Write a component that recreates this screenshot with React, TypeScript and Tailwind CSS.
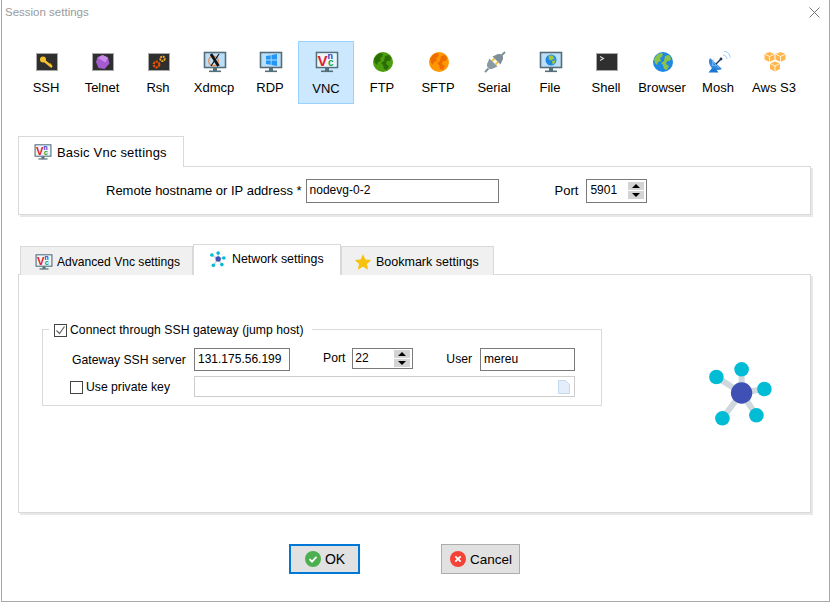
import React from "react";

function Box({ children }: { children: React.ReactNode }) {
  return (
    <svg width="24" height="24" viewBox="0 0 24 24">
      <rect x="1.5" y="3.5" width="21" height="17" fill="#2f2f2f" stroke="#a9a9a9" />
      {children}
    </svg>
  );
}

function Monitor({ children, size = 24 }: { children?: React.ReactNode; size?: number }) {
  return (
    <svg width={size} height={size} viewBox="0 0 24 24">
      <rect x="1.5" y="2.5" width="21" height="15" fill="#bbdefb" stroke="#546e7a" strokeWidth="1.6" />
      <rect x="10" y="18" width="4" height="3" fill="#546e7a" />
      <rect x="6" y="20.5" width="12" height="1.6" fill="#546e7a" />
      {children}
    </svg>
  );
}

function Vnc({ size = 24 }: { size?: number }) {
  return (
    <Monitor size={size}>
      <rect x="2.4" y="3.4" width="19.2" height="13.2" fill="#eef4f8" />
      <text x="2.6" y="15.6" fontFamily="Liberation Sans, sans-serif" fontWeight="700" fontSize="15" fill="#e11d2e">
        V
        <tspan x="12.6" y="9.4" fontSize="9" fill="#1e40c8">n</tspan>
        <tspan x="13" y="16" fontSize="10" fill="#16a34a">c</tspan>
      </text>
    </Monitor>
  );
}

function Globe({ sea, land, size = 24 }: { sea: string; land: string; size?: number }) {
  return (
    <svg width={size} height={size} viewBox="0 0 24 24">
      <circle cx="12" cy="12" r="10" fill={sea} />
      <path d="M6 5c2-2 5-2 6-1l-1 3-2 1 1 3-3 1-1 3-2-2-1-4zM14 6l4-1 2 3-1 3-3 0-1 3 3 2-2 4-3-1-1-4-2-2 3-2z" fill={land} />
    </svg>
  );
}

const tools: { label: string; icon: React.ReactNode; active?: boolean }[] = [
  {
    label: "SSH",
    icon: (
      <Box>
        <circle cx="8" cy="9.500" r="3" fill="#fbc02d" />
        <path d="M9.500 11l7.500 6" stroke="#fbc02d" strokeWidth="2.400" />
        <path d="M14.500 15.500l1.500-1.800" stroke="#fbc02d" strokeWidth="1.400" />
      </Box>
    ),
  },
  {
    label: "Telnet",
    icon: (
      <Box>
        <path d="M11.500 5l5.500 2.500 1.500 6-5 5.500-6-1-2.500-6 1.500-5z" fill="#a45bd0" />
        <path d="M11.500 5l5.500 2.500-2.500 5L7 8z" fill="#c98ae8" />
      </Box>
    ),
  },
  {
    label: "Rsh",
    icon: (
      <Box>
        <circle cx="9.500" cy="14.500" r="2.800" fill="none" stroke="#e65100" strokeWidth="2.200" strokeDasharray="2.200 .8" />
        <circle cx="15.500" cy="8.800" r="2.300" fill="none" stroke="#f9a825" strokeWidth="1.800" strokeDasharray="1.800 .7" />
      </Box>
    ),
  },
  {
    label: "Xdmcp",
    icon: (
      <Monitor>
        <circle cx="10.500" cy="11" r="4.800" fill="none" stroke="#e8914f" strokeWidth="1.400" />
        <path d="M8 4l7.500 12" stroke="#111" strokeWidth="2.800" />
        <path d="M16 4L8 16" stroke="#111" strokeWidth="1.200" />
      </Monitor>
    ),
  },
  {
    label: "RDP",
    icon: (
      <Monitor>
        <path d="M7 6l4.700-.8v4.300H7zM12.500 5l5.500-1v5.500h-5.500zM7 10.500h4.700v4.300L7 14zM12.500 10.500H18V16l-5.500-1z" fill="#2196f3" />
      </Monitor>
    ),
  },
  { label: "VNC", icon: <Vnc />, active: true },
  { label: "FTP", icon: <Globe sea="#4c9e0f" land="#2c6e06" /> },
  { label: "SFTP", icon: <Globe sea="#ff9800" land="#ef6c00" /> },
  {
    label: "Serial",
    icon: (
      <svg width="24" height="24" viewBox="0 0 24 24">
        <path d="M9 11l2.500-2.500M12.500 14.500l2.500-2.500" stroke="#fbc02d" strokeWidth="1.800" />
        <path d="M9.500 6.500l8 8 2.500-5.500V6.500l-2.500-2.500H15z" fill="#7f8f98" />
        <path d="M6.500 8.500l8 8-5.500 2.500H6.500L4 16.500V14z" fill="#8a9aa3" />
        <path d="M18.500 5.500L22 2M5.500 18.500L2 22" stroke="#7f8f98" strokeWidth="1.800" />
      </svg>
    ),
  },
  {
    label: "File",
    icon: (
      <Monitor>
        <circle cx="12" cy="10" r="5.500" fill="#1e88e5" />
        <path d="M9.500 5.500l4 0 2 3-3.500 2-2-1zM13 11l3.500-1-1 3.500-2 1z" fill="#a5c73a" />
      </Monitor>
    ),
  },
  {
    label: "Shell",
    icon: (
      <Box>
        <path d="M5 6.500l3.500 2L5 10.500" fill="none" stroke="#e0e0e0" strokeWidth="1.100" />
      </Box>
    ),
  },
  { label: "Browser", icon: <Globe sea="#1e88e5" land="#8bc34a" /> },
  {
    label: "Mosh",
    icon: (
      <svg width="24" height="24" viewBox="0 0 24 24">
        <path d="M3 8l12 11c-4 2-9 1-11-2s-3-6-1-9z" fill="#2e86de" />
        <path d="M5 11l7 7M7 9l-2 7M9 16l-4-1" stroke="#90caf9" strokeWidth=".7" />
        <path d="M9 14l5-5" stroke="#1d3557" strokeWidth="1.400" />
        <circle cx="14" cy="9" r="1.400" fill="#1d3557" />
        <path d="M1.500 22.500h10L9 19l-4-1z" fill="#1976d2" />
        <path d="M16 5c2 0 4 2 4 4M17 1.500c3.500 0 6 2.500 6 6" fill="none" stroke="#90caf9" strokeWidth="1" />
      </svg>
    ),
  },
  {
    label: "Aws S3",
    icon: (
      <svg width="24" height="24" viewBox="0 0 24 24">
        <path d="M6.500 2l5 2v5.500l-5 2.500-5-2.500V4z" fill="#ffb74d" />
        <path d="M17.500 2l5 2v5.500l-5 2.500-5-2.500V4z" fill="#ffb74d" />
        <path d="M12 11.500l5 2V19l-5 2.500L7 19v-5.500z" fill="#ffb74d" />
        <path d="M1.500 4l5 2.500 5-2.500M6.500 6.500V12M12.500 4l5 2.500 5-2.500M17.500 6.500V12M7 13.500l5 2.500 5-2.500M12 16v5.500" fill="none" stroke="#fff" strokeWidth=".8" />
      </svg>
    ),
  },
];

function Star() {
  return (
    <svg width="18" height="18" viewBox="0 0 24 24">
      <path d="M12 1.500l3.300 7 7.700.9-5.700 5.200 1.500 7.600L12 18.400l-6.800 3.800 1.500-7.600L1 9.400l7.700-.9z" fill="#f5c211" />
    </svg>
  );
}

function NetIcon({ size }: { size: number }) {
  return (
    <svg width={size} height={size} viewBox="-1 0 68 68">
      <g stroke="#cfd8dc" strokeWidth="6">
        <path d="M31.600 32L31.600 8.300M31.600 32L6.400 16M31.600 32L54.400 28M31.600 32L12.400 57.300M31.600 32L46.400 54.300" />
      </g>
      <circle cx="31.600" cy="32" r="10.700" fill="#3f51b5" />
      <circle cx="31.600" cy="8.300" r="7.300" fill="#00bcd4" />
      <circle cx="6.400" cy="16" r="7.300" fill="#00bcd4" />
      <circle cx="54.400" cy="28" r="7.300" fill="#00bcd4" />
      <circle cx="12.400" cy="57.300" r="7.300" fill="#00bcd4" />
      <circle cx="46.400" cy="54.300" r="7.300" fill="#00bcd4" />
    </svg>
  );
}

function Spin({ value, h, pad }: { value: string; h: string; pad: string }) {
  return (
    <div className={`flex w-[61px] items-center justify-between border border-[#7a7a7a] bg-white pr-[2px] text-[12px] ${h} ${pad}`}>
      <span>{value}</span>
      <div className="flex flex-col gap-[1px]">
        <div className="flex h-[8px] w-[16px] items-center justify-center bg-[#d4d4d4]">
          <div className="h-0 w-0 border-x-[4px] border-b-[4px] border-x-transparent border-b-black" />
        </div>
        <div className="flex h-[8px] w-[16px] items-center justify-center bg-[#d4d4d4]">
          <div className="h-0 w-0 border-x-[4px] border-t-[4px] border-x-transparent border-t-black" />
        </div>
      </div>
    </div>
  );
}

function Check({ checked }: { checked?: boolean }) {
  return (
    <div className="flex h-[13px] w-[13px] shrink-0 items-center justify-center border border-[#444] bg-white">
      {checked && (
        <svg width="11" height="11" viewBox="0 0 11 11">
          <path d="M1.500 5.500l3 3 5-7" fill="none" stroke="#666" strokeWidth="1.200" />
        </svg>
      )}
    </div>
  );
}

export default function App() {
  return (
    <div className="h-[603px] w-[831px] bg-white pl-px text-[13px] leading-[15px] text-black [font-family:'Liberation_Sans',Arial,sans-serif]">
      <div className="flex h-[602px] w-[829px] flex-col border-x border-b border-[#a8a8a8]">
        <div className="flex h-[24px] items-center justify-between pl-[3px] pr-[9px] text-[11.500px] text-[#9a9a9a]">
          <span>Session settings</span>
          <svg width="11" height="11" viewBox="0 0 11 11">
            <path d="M.5.500l10 10M10.500.500l-10 10" stroke="#777" strokeWidth="1" />
          </svg>
        </div>

        <div className="mt-[17px] flex pl-[16px]">
          {tools.map((t) => (
            <div
              key={t.label}
              className={`flex h-[63px] w-[56px] flex-col items-center pt-[8px] ${t.active ? "border border-[#99d1ff] bg-[#cce8ff]" : "border border-transparent"}`}
            >
              <div className="ml-[2px] h-[24px]">{t.icon}</div>
              <span className={`whitespace-nowrap ${t.active ? "mt-[7px]" : "mt-[6px]"}`}>{t.label}</span>
            </div>
          ))}
        </div>

        <div className="mt-[32px] pl-[16px]">
          <div className="relative z-10 -mb-px flex h-[31px] w-[166px] items-center gap-[5px] border border-b-0 border-[#d9d9d9] bg-white pl-[15px]">
            <Vnc size={18} />
            <span className="tracking-[0.2px]">Basic Vnc settings</span>
          </div>
          <div className="flex h-[49px] w-[793px] items-center border border-[#d9d9d9] shadow-[2px_2px_0_#e8e8e8]">
            <span className="ml-[87px] whitespace-nowrap">Remote hostname or IP address *</span>
            <div className="ml-[4px] flex h-[24px] w-[193px] items-center border border-[#7a7a7a] pl-[3px] text-[12px]">nodevg-0-2</div>
            <span className="ml-[56px]">Port</span>
            <div className="ml-[8px]">
              <Spin value="5901" h="h-[24px]" pad="pl-[3px]" />
            </div>
          </div>
        </div>

        <div className="mt-[29px] pl-[16px]">
          <div className="relative z-10 -mb-px flex h-[31px] items-end pl-[2px]">
            <div className="flex h-[29px] w-[173px] items-center gap-[4px] border border-b-0 border-[#d9d9d9] bg-[#f0f0f0] pl-[14px] pt-[2px] text-[12.100px]">
              <Vnc size={18} />
              <span>Advanced Vnc settings</span>
            </div>
            <div className="flex h-[31px] w-[148px] items-center gap-[5px] border border-b-0 border-[#d9d9d9] bg-white pl-[16px] pb-[2px] text-[12.400px]">
              <NetIcon size={17} />
              <span>Network settings</span>
            </div>
            <div className="flex h-[29px] w-[153px] items-center gap-[4px] border border-b-0 border-[#d9d9d9] bg-[#f0f0f0] pl-[12px] pt-[2px] text-[12.500px]">
              <Star />
              <span>Bookmark settings</span>
            </div>
          </div>
          <div className="relative flex h-[239px] w-[793px] items-start border border-[#d9d9d9] shadow-[2px_2px_0_#e8e8e8]">
            <div className="relative ml-[23px] mt-[54px] h-[77px] w-[560px] border border-[#d9d9d9] text-[12.200px]">
              <div className="absolute -top-[7px] left-[6px] flex items-center gap-[3px] bg-white pl-[5px] pr-[8px]">
                <Check checked />
                <span className="tracking-[0.05px]">Connect through SSH gateway (jump host)</span>
              </div>
              <div className="ml-[29px] mt-[18px] flex items-start">
                <span className="mt-[5px] w-[122px]">Gateway SSH server</span>
                <div className="flex h-[23px] w-[96px] items-center border border-[#7a7a7a] pl-[3px] text-[12px]">131.175.56.199</div>
                <span className="ml-[33px] mt-[3px]">Port</span>
                <div className="ml-[7px]">
                  <Spin value="22" h="h-[21px]" pad="pl-[2px]" />
                </div>
                <span className="ml-[33px] mt-[4px]">User</span>
                <div className="ml-[8px] flex h-[23px] w-[95px] items-center border border-[#7a7a7a] pl-[3px] text-[12px]">mereu</div>
              </div>
              <div className="ml-[27px] mt-[5px] flex items-start">
                <div className="mt-[5px]">
                  <Check />
                </div>
                <span className="ml-[3px] mt-[4px] w-[108px]">Use private key</span>
                <div className="flex h-[21px] w-[381px] items-center justify-end border border-[#cccccc] pr-[4px]">
                  <svg width="12" height="14" viewBox="0 0 12 14">
                    <path d="M.5.500h7l4 4v9H.5z" fill="#e3eefa" stroke="#c5d9ee" />
                  </svg>
                </div>
              </div>
            </div>
            <div className="ml-[107px] mt-[86px]">
              <NetIcon size={68} />
            </div>
          </div>
        </div>

        <div className="mt-[31px] flex pl-[287px]">
          <div className="flex h-[30px] w-[71px] items-center justify-center gap-[4px] border-2 border-[#0078d7] bg-[#e1e1e1] pl-px text-[14px]">
            <svg width="16" height="16" viewBox="0 0 16 16">
              <circle cx="8" cy="8" r="8" fill="#4caf50" />
              <path d="M4.500 8.200l2.500 2.500 4.500-4.800" fill="none" stroke="#fff" strokeWidth="1.800" />
            </svg>
            <span>OK</span>
          </div>
          <div className="ml-[81px] flex h-[30px] w-[79px] items-center justify-center gap-[4px] border border-[#adadad] bg-[#e1e1e1] pl-px text-[13.500px]">
            <svg width="16" height="16" viewBox="0 0 16 16">
              <circle cx="8" cy="8" r="8" fill="#f44336" />
              <path d="M5.300 5.300l5.400 5.400M10.700 5.300l-5.400 5.400" fill="none" stroke="#fff" strokeWidth="1.800" />
            </svg>
            <span>Cancel</span>
          </div>
        </div>
      </div>
    </div>
  );
}
